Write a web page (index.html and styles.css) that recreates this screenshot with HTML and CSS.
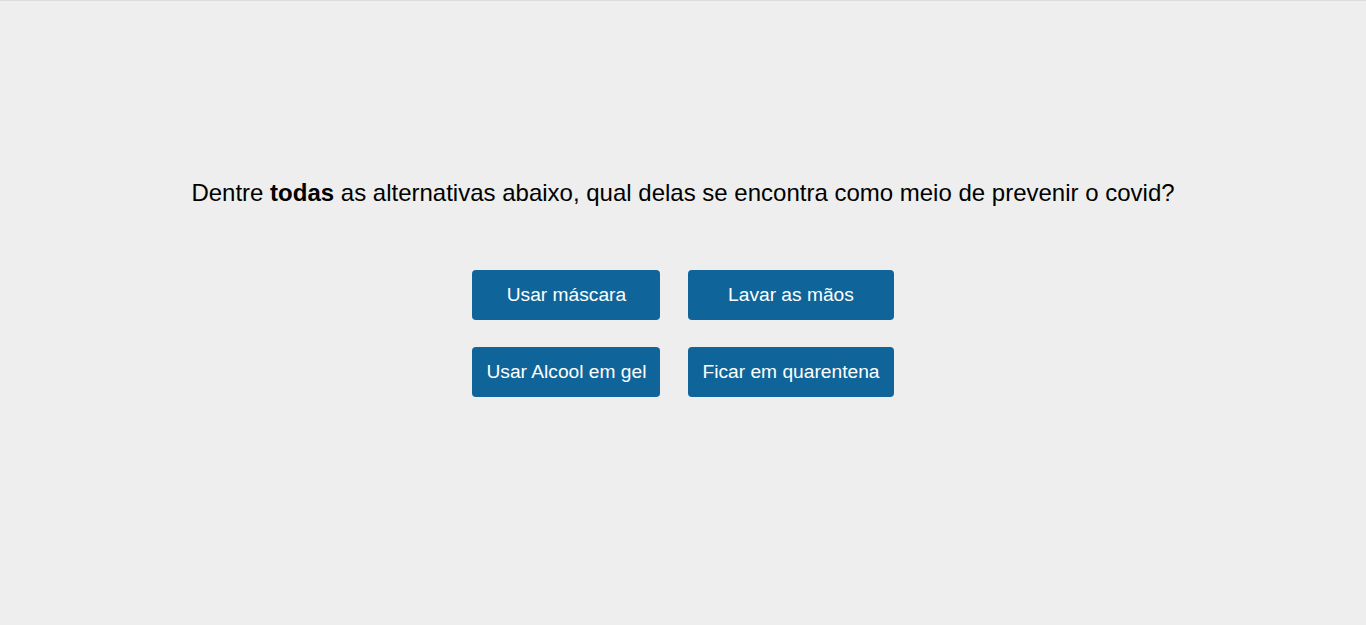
FILE: index.html
```html
<!DOCTYPE html>
<html lang="pt-BR">
<head>
<meta charset="utf-8">
<title>Quiz</title>
<link rel="stylesheet" href="styles.css">
</head>
<body>
<main class="quiz">
  <h1 class="question">Dentre <strong>todas</strong> as alternativas abaixo, qual delas se encontra como meio de prevenir o covid?</h1>
  <div class="options">
    <button class="option">Usar máscara</button>
    <button class="option">Lavar as mãos</button>
    <button class="option">Usar Alcool em gel</button>
    <button class="option">Ficar em quarentena</button>
  </div>
</main>
</body>
</html>
```
FILE: styles.css
```css
html, body {
  margin: 0;
  padding: 0;
}
body {
  background: #eeeeee;
  border-top: 1px solid #dcdce0;
  height: 624px;
  font-family: "Liberation Sans", Arial, sans-serif;
  color: #000;
}
.quiz {
  display: flex;
  flex-direction: column;
  align-items: center;
  padding-top: 177px;
}
.question {
  margin: 0;
  font-size: 24px;
  font-weight: normal;
  line-height: 30px;
}
.question strong {
  font-weight: bold;
}
.options {
  margin-top: 62px;
  display: grid;
  grid-template-columns: auto auto;
  column-gap: 28px;
  row-gap: 27px;
  justify-content: center;
}
.option {
  height: 50px;
  padding: 0 14px;
  border: none;
  border-radius: 4px;
  background: #0f6599;
  color: #fff;
  font-family: "Liberation Sans", Arial, sans-serif;
  font-size: 19.2px;
  cursor: pointer;
}
```
